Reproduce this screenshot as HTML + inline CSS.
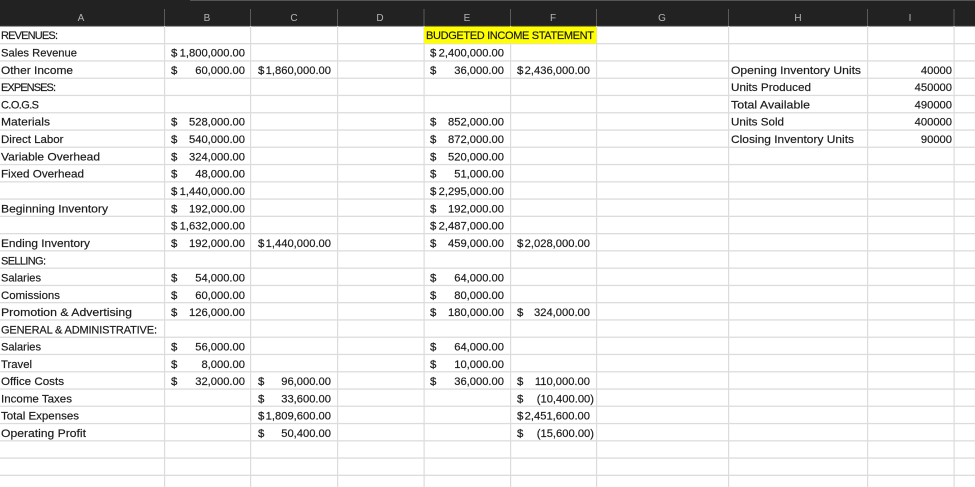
<!DOCTYPE html>
<html><head><meta charset="utf-8"><style>
html,body{margin:0;padding:0;background:#fff;width:975px;height:487px;overflow:hidden}
svg{display:block}
text{font-family:"Liberation Sans",sans-serif;font-size:11.4px;fill:#1c1c1c;stroke:#1c1c1c;stroke-width:.18px}
.r{text-anchor:end;font-size:11.2px}
.c{font-size:11px}
.h{fill:#b5b5b5;stroke:none;font-size:10px;text-anchor:middle}
</style></head><body>
<svg width="975" height="487" viewBox="0 0 975 487" xmlns="http://www.w3.org/2000/svg">
<rect width="975" height="487" fill="#fff"/>
<rect width="975" height="26" fill="#222"/>
<rect x="190" y="0" width="785" height="1" fill="#555"/>
<rect x="0" y="25.5" width="975" height="1" fill="#3a3a3a"/>
<g fill="#5a5a5a">
<rect x="164" y="9" width="1" height="17"/><rect x="250" y="9" width="1" height="17"/><rect x="337" y="9" width="1" height="17"/><rect x="423.5" y="9" width="1" height="17"/><rect x="510" y="9" width="1" height="17"/><rect x="596" y="9" width="1" height="17"/><rect x="728" y="9" width="1" height="17"/><rect x="867" y="9" width="1" height="17"/><rect x="953.5" y="9" width="1" height="17"/>
</g>
<g fill="#dcdcdc">
<rect y="43" width="975" height="1.3"/><rect y="60.3" width="975" height="1.3"/><rect y="77.6" width="975" height="1.3"/><rect y="94.8" width="975" height="1.3"/><rect y="112.1" width="975" height="1.3"/><rect y="129.4" width="975" height="1.3"/><rect y="146.6" width="975" height="1.3"/><rect y="163.9" width="975" height="1.3"/><rect y="181.2" width="975" height="1.3"/><rect y="198.4" width="975" height="1.3"/><rect y="215.7" width="975" height="1.3"/><rect y="233" width="975" height="1.3"/><rect y="250.2" width="975" height="1.3"/><rect y="267.5" width="975" height="1.3"/><rect y="284.8" width="975" height="1.3"/><rect y="302" width="975" height="1.3"/><rect y="319.3" width="975" height="1.3"/><rect y="336.6" width="975" height="1.3"/><rect y="353.8" width="975" height="1.3"/><rect y="371.1" width="975" height="1.3"/><rect y="388.4" width="975" height="1.3"/><rect y="405.6" width="975" height="1.3"/><rect y="422.9" width="975" height="1.3"/><rect y="440.2" width="975" height="1.3"/><rect y="457.4" width="975" height="1.3"/><rect y="474.7" width="975" height="1.3"/>
<rect x="164" y="26" width="1.2" height="461"/><rect x="250" y="26" width="1.2" height="461"/><rect x="337" y="26" width="1.2" height="461"/><rect x="423.5" y="26" width="1.2" height="461"/><rect x="510" y="26" width="1.2" height="461"/><rect x="596" y="26" width="1.2" height="461"/><rect x="728" y="26" width="1.2" height="461"/><rect x="867" y="26" width="1.2" height="461"/><rect x="953.5" y="26" width="1.2" height="461"/>
</g>
<rect x="424" y="26.5" width="172.5" height="17" fill="#ffff00"/>
<text class="h" x="81" y="21">A</text><text class="h" x="207" y="21">B</text><text class="h" x="294" y="21">C</text><text class="h" x="380" y="21">D</text><text class="h" x="467" y="21">E</text><text class="h" x="553" y="21">F</text><text class="h" x="662" y="21">G</text><text class="h" x="798" y="21">H</text><text class="h" x="910" y="21">I</text>

<!-- Column A -->
<text class="c" x="1" y="39" textLength="57" lengthAdjust="spacing">REVENUES:</text>
<text x="1" y="56.5" textLength="76" lengthAdjust="spacingAndGlyphs">Sales Revenue</text>
<text x="1" y="74" textLength="72" lengthAdjust="spacingAndGlyphs">Other Income</text>
<text class="c" x="1" y="91" textLength="55" lengthAdjust="spacing">EXPENSES:</text>
<text class="c" x="1" y="108.5" textLength="38" lengthAdjust="spacing">C.O.G.S</text>
<text x="1" y="125.5" textLength="49" lengthAdjust="spacingAndGlyphs">Materials</text>
<text x="1" y="143" textLength="62.5" lengthAdjust="spacingAndGlyphs">Direct Labor</text>
<text x="1" y="160.5" textLength="99" lengthAdjust="spacingAndGlyphs">Variable Overhead</text>
<text x="1" y="177.5" textLength="83" lengthAdjust="spacingAndGlyphs">Fixed Overhead</text>
<text x="1" y="212.5" textLength="107" lengthAdjust="spacingAndGlyphs">Beginning Inventory</text>
<text x="1" y="247" textLength="89" lengthAdjust="spacingAndGlyphs">Ending Inventory</text>
<text class="c" x="1" y="264.5" textLength="45" lengthAdjust="spacing">SELLING:</text>
<text x="1" y="281.5" textLength="40" lengthAdjust="spacingAndGlyphs">Salaries</text>
<text x="1" y="299" textLength="59" lengthAdjust="spacingAndGlyphs">Comissions</text>
<text x="1" y="316" textLength="131" lengthAdjust="spacingAndGlyphs">Promotion &amp; Advertising</text>
<text class="c" x="1" y="333.5" textLength="156" lengthAdjust="spacing">GENERAL &amp; ADMINISTRATIVE:</text>
<text x="1" y="350.5" textLength="40" lengthAdjust="spacingAndGlyphs">Salaries</text>
<text x="1" y="368" textLength="31" lengthAdjust="spacingAndGlyphs">Travel</text>
<text x="1" y="385" textLength="63" lengthAdjust="spacingAndGlyphs">Office Costs</text>
<text x="1" y="402.5" textLength="71" lengthAdjust="spacingAndGlyphs">Income Taxes</text>
<text x="1" y="419.5" textLength="78" lengthAdjust="spacingAndGlyphs">Total Expenses</text>
<text x="1" y="437" textLength="85" lengthAdjust="spacingAndGlyphs">Operating Profit</text>

<!-- Column B -->
<text x="171" y="56.5">$</text><text class="r" x="245" y="56.5">1,800,000.00</text>
<text x="171" y="74">$</text><text class="r" x="245" y="74">60,000.00</text>
<text x="171" y="125.5">$</text><text class="r" x="245" y="125.5">528,000.00</text>
<text x="171" y="143">$</text><text class="r" x="245" y="143">540,000.00</text>
<text x="171" y="160.5">$</text><text class="r" x="245" y="160.5">324,000.00</text>
<text x="171" y="177.5">$</text><text class="r" x="245" y="177.5">48,000.00</text>
<text x="171" y="195">$</text><text class="r" x="245" y="195">1,440,000.00</text>
<text x="171" y="212.5">$</text><text class="r" x="245" y="212.5">192,000.00</text>
<text x="171" y="229.5">$</text><text class="r" x="245" y="229.5">1,632,000.00</text>
<text x="171" y="247">$</text><text class="r" x="245" y="247">192,000.00</text>
<text x="171" y="281.5">$</text><text class="r" x="245" y="281.5">54,000.00</text>
<text x="171" y="299">$</text><text class="r" x="245" y="299">60,000.00</text>
<text x="171" y="316">$</text><text class="r" x="245" y="316">126,000.00</text>
<text x="171" y="350.5">$</text><text class="r" x="245" y="350.5">56,000.00</text>
<text x="171" y="368">$</text><text class="r" x="245" y="368">8,000.00</text>
<text x="171" y="385">$</text><text class="r" x="245" y="385">32,000.00</text>

<!-- Column C -->
<text x="258" y="74">$</text><text class="r" x="331" y="74">1,860,000.00</text>
<text x="258" y="247">$</text><text class="r" x="331" y="247">1,440,000.00</text>
<text x="258" y="385">$</text><text class="r" x="331" y="385">96,000.00</text>
<text x="258" y="402.5">$</text><text class="r" x="331" y="402.5">33,600.00</text>
<text x="258" y="419.5">$</text><text class="r" x="331" y="419.5">1,809,600.00</text>
<text x="258" y="437">$</text><text class="r" x="331" y="437">50,400.00</text>

<!-- Title -->
<text class="c" x="426" y="39" textLength="168" lengthAdjust="spacing">BUDGETED INCOME STATEMENT</text>

<!-- Column E -->
<text x="430" y="56.5">$</text><text class="r" x="504" y="56.5">2,400,000.00</text>
<text x="430" y="74">$</text><text class="r" x="504" y="74">36,000.00</text>
<text x="430" y="125.5">$</text><text class="r" x="504" y="125.5">852,000.00</text>
<text x="430" y="143">$</text><text class="r" x="504" y="143">872,000.00</text>
<text x="430" y="160.5">$</text><text class="r" x="504" y="160.5">520,000.00</text>
<text x="430" y="177.5">$</text><text class="r" x="504" y="177.5">51,000.00</text>
<text x="430" y="195">$</text><text class="r" x="504" y="195">2,295,000.00</text>
<text x="430" y="212.5">$</text><text class="r" x="504" y="212.5">192,000.00</text>
<text x="430" y="229.5">$</text><text class="r" x="504" y="229.5">2,487,000.00</text>
<text x="430" y="247">$</text><text class="r" x="504" y="247">459,000.00</text>
<text x="430" y="281.5">$</text><text class="r" x="504" y="281.5">64,000.00</text>
<text x="430" y="299">$</text><text class="r" x="504" y="299">80,000.00</text>
<text x="430" y="316">$</text><text class="r" x="504" y="316">180,000.00</text>
<text x="430" y="350.5">$</text><text class="r" x="504" y="350.5">64,000.00</text>
<text x="430" y="368">$</text><text class="r" x="504" y="368">10,000.00</text>
<text x="430" y="385">$</text><text class="r" x="504" y="385">36,000.00</text>

<!-- Column F -->
<text x="517" y="74">$</text><text class="r" x="590" y="74">2,436,000.00</text>
<text x="517" y="247">$</text><text class="r" x="590" y="247">2,028,000.00</text>
<text x="517" y="316">$</text><text class="r" x="590" y="316">324,000.00</text>
<text x="517" y="385">$</text><text class="r" x="590" y="385">110,000.00</text>
<text x="517" y="402.5">$</text><text class="r" x="594" y="402.5">(10,400.00)</text>
<text x="517" y="419.5">$</text><text class="r" x="590" y="419.5">2,451,600.00</text>
<text x="517" y="437">$</text><text class="r" x="594" y="437">(15,600.00)</text>

<!-- Column H / I -->
<text x="731" y="74" textLength="130" lengthAdjust="spacingAndGlyphs">Opening Inventory Units</text><text class="r" x="952" y="74">40000</text>
<text x="731" y="91" textLength="80" lengthAdjust="spacingAndGlyphs">Units Produced</text><text class="r" x="952" y="91">450000</text>
<text x="731" y="108.5" textLength="79" lengthAdjust="spacingAndGlyphs">Total Available</text><text class="r" x="952" y="108.5">490000</text>
<text x="731" y="125.5" textLength="53" lengthAdjust="spacingAndGlyphs">Units Sold</text><text class="r" x="952" y="125.5">400000</text>
<text x="731" y="143" textLength="123" lengthAdjust="spacingAndGlyphs">Closing Inventory Units</text><text class="r" x="952" y="143">90000</text>
</svg>
</body></html>
